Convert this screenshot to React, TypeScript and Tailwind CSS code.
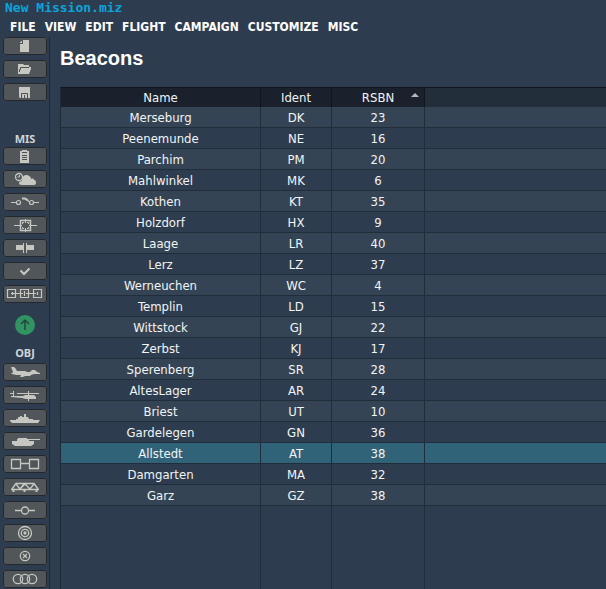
import type { ReactNode } from 'react';
import clsx from 'clsx';

type Tool = { label: string; icon: ReactNode };

const menu = ['FILE', 'VIEW', 'EDIT', 'FLIGHT', 'CAMPAIGN', 'CUSTOMIZE', 'MISC'];

const beacons: [string, string, number][] = [
  ['Merseburg', 'DK', 23],
  ['Peenemunde', 'NE', 16],
  ['Parchim', 'PM', 20],
  ['Mahlwinkel', 'MK', 6],
  ['Kothen', 'KT', 35],
  ['Holzdorf', 'HX', 9],
  ['Laage', 'LR', 40],
  ['Lerz', 'LZ', 37],
  ['Werneuchen', 'WC', 4],
  ['Templin', 'LD', 15],
  ['Wittstock', 'GJ', 22],
  ['Zerbst', 'KJ', 17],
  ['Sperenberg', 'SR', 28],
  ['AltesLager', 'AR', 24],
  ['Briest', 'UT', 10],
  ['Gardelegen', 'GN', 36],
  ['Allstedt', 'AT', 38],
  ['Damgarten', 'MA', 32],
  ['Garz', 'GZ', 38],
];

const selected = 'Allstedt';

// icons share a 44x18 box, the size of a toolbar button
const fileTools: Tool[] = [
  {
    label: 'New',
    icon: <path d="M20 3h6v12h-9V7h3zM19 3v3h-2V5h1V4h1z" fill="currentColor" />,
  },
  {
    label: 'Open',
    icon: (
      <>
        <path d="M15 4h5l1 1h5v2h2v2l-2 5H15z" fill="currentColor" />
        <path d="M16.5 12V9.5h1v-2H26" fill="none" stroke="#4b5256" />
      </>
    ),
  },
  {
    label: 'Save',
    icon: (
      <>
        <path d="M16 4h11v11H17l-1-1z" fill="currentColor" />
        <path d="M18.5 15v-4.5h6V15M21.5 12v3" fill="none" stroke="#4b5256" />
      </>
    ),
  },
];

const missionTools: Tool[] = [
  {
    label: 'Briefing',
    icon: (
      <>
        <path d="M17 4h2V3h5v1h2v12h-9z" fill="currentColor" />
        <path d="M19 5.5h5M19 8.5h5M19 10.5h5M19 12.5h5" stroke="#4b5256" />
      </>
    ),
  },
  {
    label: 'Weather',
    icon: (
      <>
        <circle cx="16" cy="7" r="3.5" fill="none" stroke="currentColor" strokeWidth="1.3" />
        <path d="M14.5 7h2V5" fill="none" stroke="currentColor" />
        <path
          d="M19 15c-2 0-3-1-3-2s1-2 3-2c0-4 2-6 4-6s5 1 5 4c2-1 3 0 3 1 2 0 2 2 2 3s-1 2-2 2z"
          fill="currentColor"
        />
      </>
    ),
  },
  {
    label: 'Triggers',
    icon: (
      <g fill="none" stroke="currentColor" strokeWidth="1.2">
        <path d="M8 9.5h5M31 9.5h5M19 5.5h3l4 3" />
        <circle cx="15.5" cy="9.5" r="2" />
        <circle cx="28.5" cy="9.5" r="2" />
        <path d="M19 5.500h3l3 2" strokeWidth="2" />
      </g>
    ),
  },
  {
    label: 'Zones',
    icon: (
      <g fill="none" stroke="currentColor">
        <path d="M11 9.5h8M26 9.5h8M22.5 3v4M22.5 12v4" />
        <path d="M17.5 4.5h10v10h-10z" strokeWidth="1.5" />
        <path d="M19.5 8V6.5H21M24 6.5h1.5V8M25.5 11v1.5H24M21 12.5h-1.5V11" />
      </g>
    ),
  },
  {
    label: 'Alignment',
    icon: <path d="M13 6h7v5h-7zM20 4h1v10h-1zM23 4h1v10h-1zM24 6h7v5h-7z" fill="currentColor" />,
  },
  {
    label: 'Validate',
    icon: <path d="M17.5 8.5l3.5 3.5 5.5-5.5" fill="none" stroke="currentColor" strokeWidth="2" />,
  },
  {
    label: 'Sequence',
    icon: (
      <g fill="none" stroke="currentColor" strokeWidth="1.2">
        <path d="M4.500 4.500h8v8h-8zM17.500 4.500h8v8h-8zM30.500 4.500h8v8h-8z" />
        <path d="M8 8.500h12M23 8.500h10M9.500 7v3M21.500 6v5M34.500 7v3" />
      </g>
    ),
  },
];

const objectTools: Tool[] = [
  {
    label: 'Airplanes',
    icon: (
      <path
        d="M8 4h3l2 2 1 2h8l2 1h3l2-2h3l2 2 3 1v1h-6l-3 1-1 1h-5l-2 1h-3l1-2h-5l-4-1-1-1H9l1-1z"
        fill="currentColor"
      />
    ),
  },
  {
    label: 'Helicopters',
    icon: (
      <>
        <path d="M14 7.5h22M10.5 5v6M7 7.5h4M25.5 5v4" stroke="currentColor" fill="none" />
        <path d="M8 10h12l2-1h9l2 2v2h-10l-4-1-11-1z" fill="currentColor" />
        <path d="M25.5 13v2" stroke="currentColor" />
      </>
    ),
  },
  {
    label: 'Ships',
    icon: (
      <path
        d="M7 11h6v-1h2V8h2V7h2v1h2V5h2v3h2l1 2h4v1h7l-2 3H9l-2-2z"
        fill="currentColor"
      />
    ),
  },
  {
    label: 'Vehicles',
    icon: <path d="M15 6h9v1h13v1H26v1h5v3l-3 2H12l-3-2V9h5V7h1z" fill="currentColor" />,
  },
  {
    label: 'Groups',
    icon: (
      <path
        d="M8.5 4.5h9v9h-9zM26.5 4.5h9v9h-9zM18 8.5h8"
        fill="none"
        stroke="currentColor"
        strokeWidth="1.3"
      />
    ),
  },
  {
    label: 'Bridges',
    icon: (
      <g fill="none" stroke="currentColor" strokeWidth="1.4">
        <path d="M8 11.5h28M9 11l4-5.500h18l4 5.500M13 6l4 5 5-5 5 5 4-5M17 11l-4-5M17 11l4-5" />
        <path d="M10.5 12v2M21.5 12v2M33.5 12v2" strokeWidth="2" />
      </g>
    ),
  },
  {
    label: 'Waypoints',
    icon: (
      <g fill="none" stroke="currentColor" strokeWidth="1.3">
        <circle cx="22" cy="9.5" r="3.5" />
        <path d="M12 9.5h6M26 9.5h6" />
      </g>
    ),
  },
  {
    label: 'Targets',
    icon: (
      <g fill="none" stroke="currentColor" strokeWidth="1.3">
        <circle cx="22" cy="9" r="6.5" />
        <circle cx="22" cy="9" r="3.7" />
        <circle cx="22" cy="9" r="1" fill="currentColor" />
      </g>
    ),
  },
  {
    label: 'Exclusions',
    icon: (
      <g fill="none" stroke="currentColor" strokeWidth="1.2">
        <circle cx="22" cy="9" r="4.7" />
        <path d="M20 7l4 4M24 7l-4 4" />
      </g>
    ),
  },
  {
    label: 'Areas',
    icon: (
      <g fill="none" stroke="currentColor" strokeWidth="1.3">
        <circle cx="15" cy="9" r="4.7" />
        <circle cx="22" cy="9" r="4.7" />
        <circle cx="29" cy="9" r="4.7" />
      </g>
    ),
  },
];

function ToolGroup({ tools }: { tools: Tool[] }) {
  return (
    <div className="flex flex-col gap-[5px]">
      {tools.map(tool => (
        <button
          key={tool.label}
          type="button"
          aria-label={tool.label}
          className="h-[18px] w-11 rounded-[3px] bg-[#505659] text-[#c6c7c0] outline-1 -outline-offset-1 outline-[#23282c] hover:bg-[#5d6468]"
        >
          <svg viewBox="0 0 44 18" className="block h-[18px] w-11">
            {tool.icon}
          </svg>
        </button>
      ))}
    </div>
  );
}

function Sidebar() {
  return (
    <aside className="flex w-[50px] shrink-0 flex-col items-center border-r border-[#1b2836] pl-px font-['Noto_Sans','Open_Sans',sans-serif]">
      <ToolGroup tools={fileTools} />
      <h2 className="mt-[30px] h-4 text-[11px] leading-4 font-bold text-[#d0d4d8]">MIS</h2>
      <ToolGroup tools={missionTools} />
      <button type="button" aria-label="Upload" className="mt-3 size-5 rounded-full bg-[#319262] text-[#22463f]">
        <svg viewBox="0 0 20 20" className="block size-5">
          <path d="M10 15V5M6 9l4-4 4 4" fill="none" stroke="currentColor" strokeWidth="1.5" />
        </svg>
      </button>
      <h2 className="mt-[10px] h-[18px] text-[11px] leading-4 font-bold text-[#d0d4d8]">OBJ</h2>
      <ToolGroup tools={objectTools} />
    </aside>
  );
}

function BeaconTable() {
  return (
    <div className="flex flex-1 flex-col border-l border-[#1e2a37]">
      <table className="w-full table-fixed border-separate border-spacing-0 text-center text-[13px]">
        <colgroup>
          <col className="w-[200px]" />
          <col className="w-[71px]" />
          <col className="w-[93px]" />
          <col />
        </colgroup>
        <thead>
          <tr className="h-5 bg-[#1b212c] leading-[18px]">
            <th className="border-t border-r border-[#11161e] p-0 font-normal">Name</th>
            <th className="border-t border-r border-[#11161e] p-0 font-normal">Ident</th>
            <th aria-sort="ascending" className="relative border-t border-r border-[#11161e] p-0 font-normal">
              RSBN
              <svg viewBox="0 0 8 4" className="absolute top-[5px] right-[5px] h-1 w-2">
                <path d="M0 4l4-4 4 4z" fill="#b5b7ba" />
              </svg>
            </th>
            <td className="border-t border-[#11161e] bg-[#232e3b] p-0" />
          </tr>
        </thead>
        <tbody>
          {beacons.map(([name, ident, rsbn]) => (
            <tr
              key={name}
              className={clsx(
                'h-[21px] leading-[18px]',
                name === selected ? 'bg-[#306377]' : 'odd:bg-[#344454] even:bg-[#2d3d4f]',
              )}
            >
              <td className="border-r border-b border-[#202d3b] p-0 pt-[2px]">{name}</td>
              <td className="border-r border-b border-[#202d3b] p-0 pt-[2px]">{ident}</td>
              <td className="border-r border-b border-[#202d3b] p-0 pt-[2px]">{rsbn}</td>
              <td className="border-b border-[#202d3b] p-0" />
            </tr>
          ))}
        </tbody>
      </table>
      {/* column rules run on below the last row */}
      <div className="flex flex-1">
        <div className="w-[200px] border-r border-[#202d3b]" />
        <div className="w-[71px] border-r border-[#202d3b]" />
        <div className="w-[93px] border-r border-[#202d3b]" />
      </div>
    </div>
  );
}

export default function App() {
  return (
    <div className="flex min-h-screen flex-col bg-[#2d3d4f] font-['DejaVu_Sans_Condensed','DejaVu_Sans',sans-serif] text-[#f2f4f6]">
      <header>
        <p className="h-4 pl-[5px] font-['DejaVu_Sans_Mono',monospace] text-[13px] leading-[15px] font-bold text-[#0ca4dc]">
          New Mission.miz
        </p>
        <nav className="flex h-[21px] gap-[9px] pl-[10px] text-xs leading-[22px] font-bold text-white">
          {menu.map(item => (
            <button key={item} type="button" className="hover:text-[#0ca4dc]">
              {item}
            </button>
          ))}
        </nav>
      </header>
      <div className="flex flex-1">
        <Sidebar />
        <main className="flex flex-1 flex-col pl-[10px]">
          <h1 className="h-[50px] pt-[6px] font-['Liberation_Sans',Arial,sans-serif] text-xl leading-[30px] font-bold text-white">
            Beacons
          </h1>
          <BeaconTable />
        </main>
      </div>
    </div>
  );
}
